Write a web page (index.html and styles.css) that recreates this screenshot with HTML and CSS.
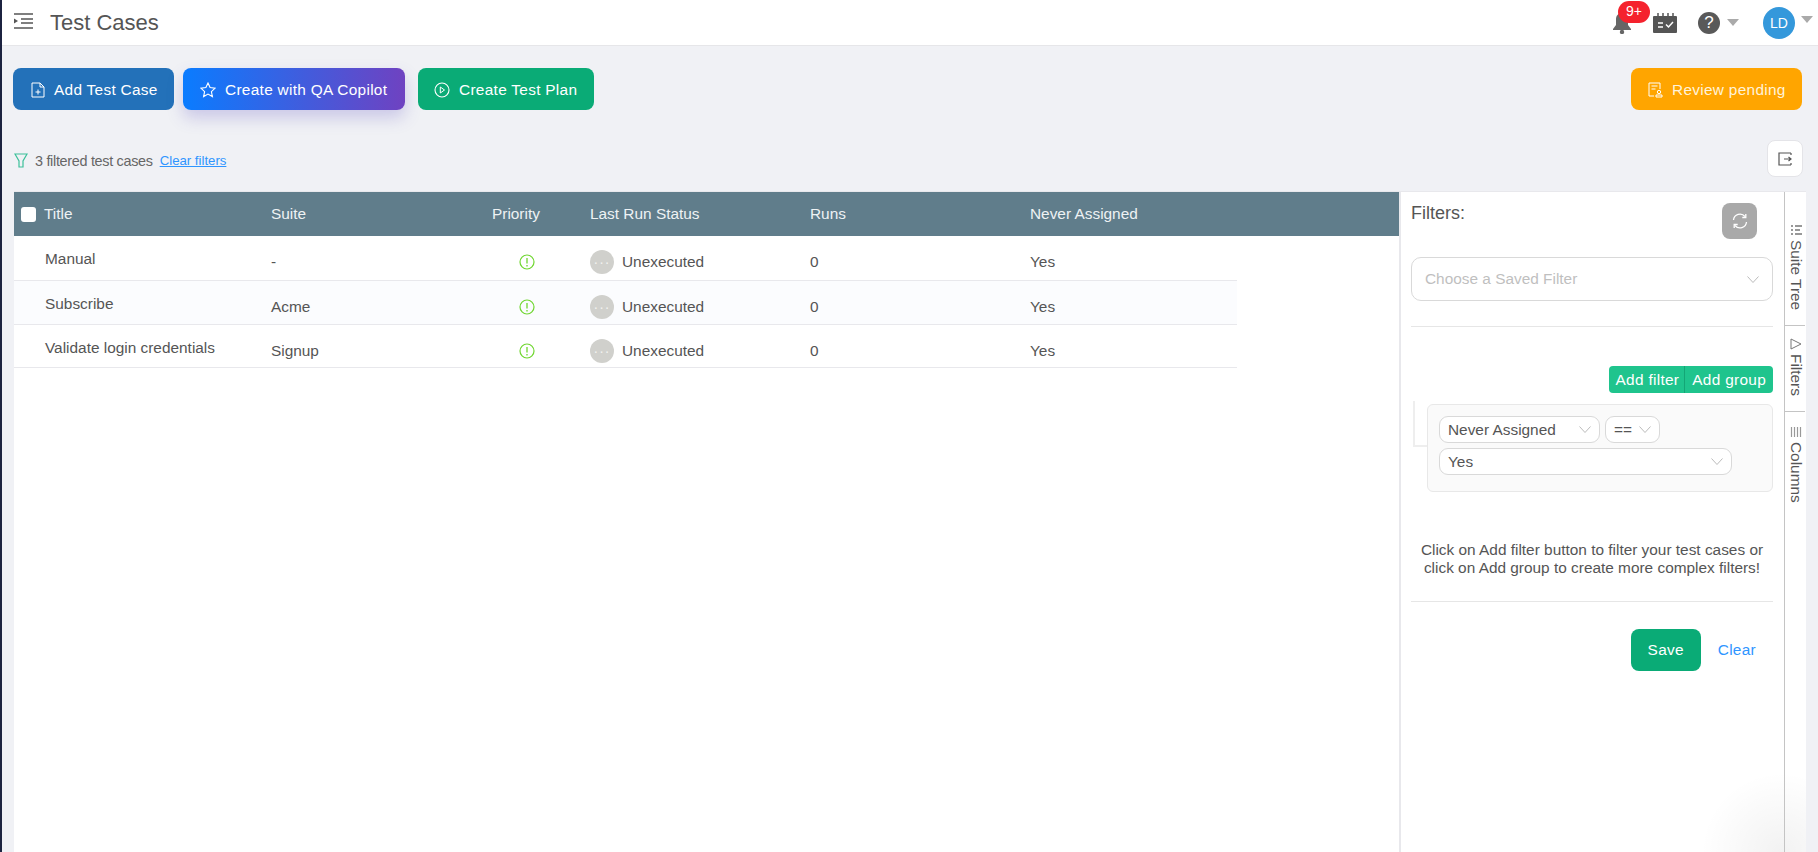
FILE: index.html
```html
<!DOCTYPE html>
<html lang="en">
<head>
    <meta charset="UTF-8">
    <title>Test Cases</title>
    <link rel="stylesheet" href="styles.css">
</head>
<body>
    <div class="topbar">
        <svg class="menu-icon" viewBox="0 0 19 16" width="19" height="16"><path d="M0 1h19M7 6h12M7 10h12M0 15h19" stroke="#555" stroke-width="1.600" fill="none"/><path d="M0 5.500l4 2.500-4 2.500z" fill="#555"/></svg>
        <h1 class="page-title">Test Cases</h1>
        <div class="topbar-right">
            <div class="bell">
                <svg viewBox="0 0 20 22" width="20" height="22"><path d="M10 1c-4 0-6 3-6 6v6l-3 4v1h18v-1l-3-4V7c0-3-2-6-6-6z" fill="#666"/><circle cx="10" cy="20" r="2.200" fill="#666"/></svg>
                <span class="badge">9+</span>
            </div>
            <svg class="calendar" viewBox="0 0 24 20" width="24" height="20"><path d="M1 3h22a1 1 0 0 1 1 1v15a1 1 0 0 1-1 1H1a1 1 0 0 1-1-1V4a1 1 0 0 1 1-1z" fill="#555"/><path d="M5 0v4M10 0v4M15 0v4M20 0v4" stroke="#555" stroke-width="1.500"/><path d="M5 10h5M5 14h5" stroke="#fff" stroke-width="1.500"/><path d="M13 11.500l2.500 2.500 4.500-5" stroke="#fff" stroke-width="1.500" fill="none"/></svg>
            <span class="help">?</span>
            <span class="caret"></span>
            <span class="avatar">LD</span>
            <span class="caret caret-user"></span>
        </div>
    </div>

    <div class="actions">
        <button class="btn btn-blue">
            <svg viewBox="0 0 14 16" width="14" height="16"><path d="M1 1h8l4 4v10H1zM9 1v4h4M7 7.500v5M4.500 10h5" stroke="#fff" stroke-width="1" fill="none"/></svg>
            Add Test Case
        </button>
        <button class="btn btn-copilot">
            <svg viewBox="0 0 16 16" width="16" height="16"><path d="M8 1l2.100 4.600 5 .6-3.700 3.400 1 5L8 12.100 3.600 14.600l1-5L.9 6.200l5-.6z" stroke="#fff" stroke-width="1.100" fill="none"/></svg>
            Create with QA Copilot
        </button>
        <button class="btn btn-green">
            <svg viewBox="0 0 16 16" width="16" height="16"><circle cx="8" cy="8" r="7" stroke="#fff" stroke-width="1.100" fill="none"/><path d="M6.300 5l4.200 3-4.200 3z" stroke="#fff" stroke-width="1" fill="none"/></svg>
            Create Test Plan
        </button>
        <button class="btn btn-orange">
            <svg viewBox="0 0 16 16" width="16" height="16"><path d="M13 7V1H2v13h5M4.500 4h6M4.500 7h4" stroke="#fff" stroke-width="1" fill="none"/><circle cx="12" cy="10" r="1.700" stroke="#fff" stroke-width="1" fill="none"/><path d="M9 13h6v2H9z" stroke="#fff" stroke-width="1" fill="none"/></svg>
            Review pending
        </button>
    </div>

    <div class="filter-bar">
        <div class="filter-info">
            <svg viewBox="0 0 14 15" width="14" height="15"><path d="M1 1h12L9 8v6H5V8z" stroke="#3cc09a" stroke-width="1.200" fill="none"/></svg>
            <span class="filter-count">3 filtered test cases</span>
            <a class="clear-link">Clear filters</a>
        </div>
        <span class="panel-toggle">
            <svg viewBox="0 0 14 14" width="14" height="14"><path d="M13 1H1v12h12M13 1v2M13 11v2M6 7h7M10.500 5l2.500 2-2.500 2" stroke="#555" stroke-width="1.200" fill="none"/></svg>
        </span>
    </div>

    <div class="main">
        <div class="table-area">
            <div class="table-row table-head">
                <div class="cell-title"><span class="checkbox"></span>Title</div>
                <div>Suite</div>
                <div>Priority</div>
                <div>Last Run Status</div>
                <div>Runs</div>
                <div>Never Assigned</div>
            </div>
            <div class="table-row body-row">
                <div class="row-title">Manual</div>
                <div>-</div>
                <div class="priority"><svg viewBox="0 0 16 16" width="16" height="16"><circle cx="8" cy="8" r="7" stroke="#6fd62f" stroke-width="1.200" fill="none"/><path d="M8 4v5.500M8 11v1.500" stroke="#6fd62f" stroke-width="1.300"/></svg></div>
                <div class="status"><span class="status-dot">···</span>Unexecuted</div>
                <div>0</div>
                <div>Yes</div>
            </div>
            <div class="table-row body-row row-alt">
                <div class="row-title">Subscribe</div>
                <div>Acme</div>
                <div class="priority"><svg viewBox="0 0 16 16" width="16" height="16"><circle cx="8" cy="8" r="7" stroke="#6fd62f" stroke-width="1.200" fill="none"/><path d="M8 4v5.500M8 11v1.500" stroke="#6fd62f" stroke-width="1.300"/></svg></div>
                <div class="status"><span class="status-dot">···</span>Unexecuted</div>
                <div>0</div>
                <div>Yes</div>
            </div>
            <div class="table-row body-row">
                <div class="row-title">Validate login credentials</div>
                <div>Signup</div>
                <div class="priority"><svg viewBox="0 0 16 16" width="16" height="16"><circle cx="8" cy="8" r="7" stroke="#6fd62f" stroke-width="1.200" fill="none"/><path d="M8 4v5.500M8 11v1.500" stroke="#6fd62f" stroke-width="1.300"/></svg></div>
                <div class="status"><span class="status-dot">···</span>Unexecuted</div>
                <div>0</div>
                <div>Yes</div>
            </div>
        </div>

        <div class="filters-panel">
            <div class="filters-head">
                <h2>Filters:</h2>
                <span class="refresh">
                    <svg viewBox="0 0 16 16" width="16" height="16"><path d="M1.500 7a6.500 6.500 0 0 1 11.500-3.500M14.500 9A6.500 6.500 0 0 1 3 12.500" stroke="#fff" stroke-width="1.300" fill="none"/><path d="M13.800 1v3.500h-3.500M2.200 15v-3.500h3.500" stroke="#fff" stroke-width="1.300" fill="none"/></svg>
                </span>
            </div>
            <div class="saved-select">
                Choose a Saved Filter
                <svg class="chev" viewBox="0 0 12 7" width="12" height="7"><path d="M.5.500L6 6.500 11.500.500" stroke="#bbb" fill="none"/></svg>
            </div>
            <div class="rule rule-top"></div>
            <div class="add-group">
                <span>Add filter</span><span>Add group</span>
            </div>
            <div class="group-wrap">
                <div class="group-line"></div>
                <div class="group-box">
                    <div class="pill-row">
                        <div class="pill pill-field">Never Assigned<svg class="chev" viewBox="0 0 12 7" width="12" height="7"><path d="M.5.500L6 6.500 11.500.500" stroke="#bbb" fill="none"/></svg></div>
                        <div class="pill pill-op">==<svg class="chev" viewBox="0 0 12 7" width="12" height="7"><path d="M.5.500L6 6.500 11.500.500" stroke="#bbb" fill="none"/></svg></div>
                    </div>
                    <div class="pill pill-value">Yes<svg class="chev" viewBox="0 0 12 7" width="12" height="7"><path d="M.5.500L6 6.500 11.500.500" stroke="#bbb" fill="none"/></svg></div>
                </div>
            </div>
            <p class="help-text">Click on Add filter button to filter your test cases or<br>click on Add group to create more complex filters!</p>
            <div class="rule"></div>
            <div class="save-row">
                <button class="btn-save">Save</button>
                <a class="clear-btn">Clear</a>
            </div>
        </div>

        <div class="side-tabs">
            <div class="tab tab-suite">
                <svg viewBox="0 0 13 12" width="13" height="12"><path d="M1 2h2M5 2h7M1 6h2M5 6h5M1 10h2M5 10h7" stroke="#777" stroke-width="1.500" fill="none"/></svg>
                Suite Tree
            </div>
            <div class="tab tab-active">
                <svg viewBox="0 0 12 12" width="12" height="12"><path d="M1 1l10 5-10 5z" stroke="#777" stroke-width="1" fill="none"/></svg>
                Filters
            </div>
            <div class="tab tab-columns">
                <svg viewBox="0 0 12 12" width="12" height="12"><path d="M1.500 1v10M4.500 1v10M7.500 1v10M10.500 1v10" stroke="#999" stroke-width="1.200"/></svg>
                Columns
            </div>
        </div>
    </div>
</body>
</html>
```
FILE: styles.css
```css
* {
    box-sizing: border-box;
    margin: 0;
    padding: 0;
    font-family: "Liberation Sans", Arial, sans-serif;
}

html, body {
    height: 100%;
    overflow: hidden;
}

body {
    display: flex;
    flex-direction: column;
    background: #f0f1f5;
    border-left: 2px solid #1c2340;
    color: #555;
}

button {
    border: none;
    cursor: pointer;
}

/* top bar */
.topbar {
    display: flex;
    align-items: center;
    height: 46px;
    padding-left: 12px;
    background: white;
    border-bottom: 1px solid #e6e6e9;
    flex-shrink: 0;
}

.menu-icon {
    margin-top: -4px;
}

.page-title {
    margin-left: 17px;
    font-size: 22px;
    font-weight: normal;
    color: #555;
}

.topbar-right {
    display: flex;
    align-items: center;
    margin-left: auto;
    padding-right: 5px;
}

.bell {
    position: relative;
    display: flex;
    margin-right: 21px;
}

.badge {
    position: absolute;
    top: -11px;
    left: 6px;
    width: 32px;
    height: 22px;
    border-radius: 11px;
    background: #f5222d;
    color: white;
    font-size: 14px;
    line-height: 21px;
    text-align: center;
}

.help {
    width: 22px;
    height: 22px;
    margin-left: 21px;
    border-radius: 50%;
    background: #595959;
    color: white;
    font-size: 17px;
    line-height: 22px;
    text-align: center;
}

.caret {
    width: 0;
    height: 0;
    margin-left: 7px;
    border-left: 6px solid transparent;
    border-right: 6px solid transparent;
    border-top: 7px solid #aaa;
}

.caret-user {
    margin: -6px 0 0 6px;
}

.avatar {
    width: 32px;
    height: 32px;
    margin-left: 24px;
    border-radius: 50%;
    background: #3498db;
    color: white;
    font-size: 14px;
    line-height: 32px;
    text-align: center;
}

/* action buttons */
.actions {
    display: flex;
    gap: 9px;
    padding: 22px 16px 0 11px;
    flex-shrink: 0;
}

.btn {
    display: flex;
    align-items: center;
    gap: 9px;
    height: 42px;
    padding: 1px 16px 0;
    border-radius: 8px;
    color: white;
    font-size: 15.400px;
    letter-spacing: 0.3px;
}

.btn-blue {
    width: 161px;
    padding-left: 18px;
    background: #2371b9;
}

.btn-copilot {
    width: 222px;
    padding-left: 17px;
    background: linear-gradient(90deg, #0a7cff, #6f42c1);
    box-shadow: 0 8px 16px rgba(90, 80, 190, 0.25);
}

.btn-green {
    width: 176px;
    margin-left: 4px;
    background: #0aab76;
}

.btn-orange {
    width: 171px;
    margin-left: auto;
    background: #ffa500;
    color: #fff3d9;
}

/* filter summary */
.filter-bar {
    display: flex;
    align-items: center;
    justify-content: space-between;
    height: 37px;
    margin-top: 30px;
    padding: 0 15px 0 12px;
    flex-shrink: 0;
}

.filter-info {
    display: flex;
    align-items: center;
    padding-top: 4px;
}

.filter-count {
    margin-left: 7px;
    font-size: 14.400px;
    letter-spacing: -0.3px;
    color: #666;
}

.clear-link {
    margin-left: 7px;
    font-size: 13.200px;
    color: #2f95ff;
    text-decoration: underline;
}

.panel-toggle {
    display: flex;
    align-items: center;
    justify-content: center;
    width: 36px;
    height: 37px;
    border: 1px solid #e4e4e8;
    border-radius: 8px;
    background: white;
}

/* main area */
.main {
    display: flex;
    flex: 1;
    min-height: 0;
    margin: 14px 12px 0 12px;
    border-top: 1px solid #e8e8ec;
    background: radial-gradient(circle 80px at calc(100% - 25px) 100%, rgba(0, 0, 0, 0.05), transparent), white;
}

.table-area {
    width: 1385px;
    flex-shrink: 0;
    font-size: 15.400px;
}

.table-row {
    display: grid;
    grid-template-columns: 257px 221px 98px 220px 220px 1fr;
}

.table-head {
    align-items: center;
    height: 44px;
    background: #607d8b;
    color: #eef2f4;
}

.cell-title {
    display: flex;
    align-items: center;
    padding-left: 7px;
}

.checkbox {
    width: 15px;
    height: 15px;
    margin-right: 8px;
    border-radius: 3px;
    background: white;
}

.body-row {
    width: 1223px;
    height: 44px;
    padding-top: 14px;
    align-items: start;
    line-height: 24px;
    border-bottom: 1px solid #e8e8ec;
    color: #555;
}

.table-head + .body-row {
    height: 45px;
}

.body-row:last-child {
    height: 43px;
}

.row-alt {
    background: #fbfcfe;
}

.row-title {
    margin-top: -3px;
    padding-left: 31px;
}

.priority {
    display: flex;
    align-items: center;
    height: 24px;
    padding-left: 27px;
}

.status {
    display: flex;
    align-items: center;
}

.status-dot {
    width: 24px;
    height: 24px;
    margin-right: 8px;
    border-radius: 50%;
    background: #d0d0cc;
    color: #f2f2f0;
    font-size: 14px;
    letter-spacing: 1px;
    line-height: 24px;
    text-align: center;
}

/* filters panel */
.filters-panel {
    width: 386px;
    flex-shrink: 0;
    padding: 11px 11px 0 10px;
    border-left: 2px solid #e8e8ec;
    border-right: 1px solid #c4c4c4;
}

.filters-head {
    display: flex;
    justify-content: space-between;
    padding-right: 16px;
}

.filters-head h2 {
    font-size: 18px;
    font-weight: normal;
    color: #555;
}

.refresh {
    display: flex;
    align-items: center;
    justify-content: center;
    width: 35px;
    height: 36px;
    border-radius: 8px;
    background: #a9a9a9;
}

.saved-select {
    display: flex;
    align-items: center;
    justify-content: space-between;
    height: 44px;
    margin-top: 18px;
    padding: 0 13px;
    border: 1px solid #d9d9d9;
    border-radius: 10px;
    color: #bfbfbf;
    font-size: 15.400px;
}

.rule {
    height: 1px;
    background: #e6e6e6;
}

.rule-top {
    margin-top: 25px;
}

.add-group {
    display: flex;
    justify-content: flex-end;
    margin-top: 39px;
    color: white;
    font-size: 15.400px;
    letter-spacing: 0.3px;
}

.add-group span {
    height: 27px;
    padding: 0 7px;
    background: #1fc48d;
    line-height: 27px;
}

.add-group span:first-child {
    padding-right: 5px;
    border-right: 1px solid #14a676;
    border-radius: 4px 0 0 4px;
}

.add-group span:last-child {
    border-radius: 0 4px 4px 0;
}

.group-wrap {
    display: flex;
    margin-top: 11px;
}

.group-line {
    width: 16px;
    height: 46px;
    margin-top: -3px;
    margin-left: 2px;
    border-left: 2px solid #eee;
    border-bottom: 2px solid #eee;
    flex-shrink: 0;
    margin-right: -2px;
}

.group-box {
    flex: 1;
    height: 88px;
    padding: 11px;
    border: 1px solid #e8e8e8;
    border-radius: 6px;
    background: #fafafa;
}

.pill-row {
    display: flex;
    gap: 5px;
    margin-bottom: 5px;
}

.pill {
    display: flex;
    align-items: center;
    justify-content: space-between;
    height: 27px;
    padding: 0 8px;
    border: 1px solid #d9d9d9;
    border-radius: 9px;
    background: white;
    font-size: 15.400px;
    color: #555;
}

.pill-field {
    width: 161px;
}

.pill-op {
    width: 55px;
}

.pill-value {
    width: 293px;
}

.help-text {
    margin-top: 49px;
    font-size: 15.400px;
    line-height: 18px;
    text-align: center;
}

.help-text + .rule {
    margin-top: 24px;
}

.save-row {
    display: flex;
    align-items: center;
    justify-content: flex-end;
    gap: 17px;
    margin-top: 27px;
    padding-right: 17px;
}

.btn-save {
    width: 70px;
    height: 42px;
    border-radius: 8px;
    background: #0aab76;
    color: white;
    font-size: 15.400px;
    letter-spacing: 0.3px;
}

.clear-btn {
    color: #2f95ff;
    font-size: 15.400px;
    letter-spacing: 0.3px;
}

/* side tabs */
.side-tabs {
    width: 21px;
    flex-shrink: 0;
}

.tab {
    display: flex;
    align-items: center;
    gap: 4px;
    writing-mode: vertical-rl;
    padding: 32px 0 10px 2px;
    font-size: 15.400px;
    color: #555;
}

.tab-suite {
    height: 134px;
    border-bottom: 1px solid #c4c4c4;
}

.tab-active {
    height: 85px;
    padding-top: 12px;
}

.tab-columns {
    padding-top: 14px;
    border-top: 1px solid #c4c4c4;
}
```
